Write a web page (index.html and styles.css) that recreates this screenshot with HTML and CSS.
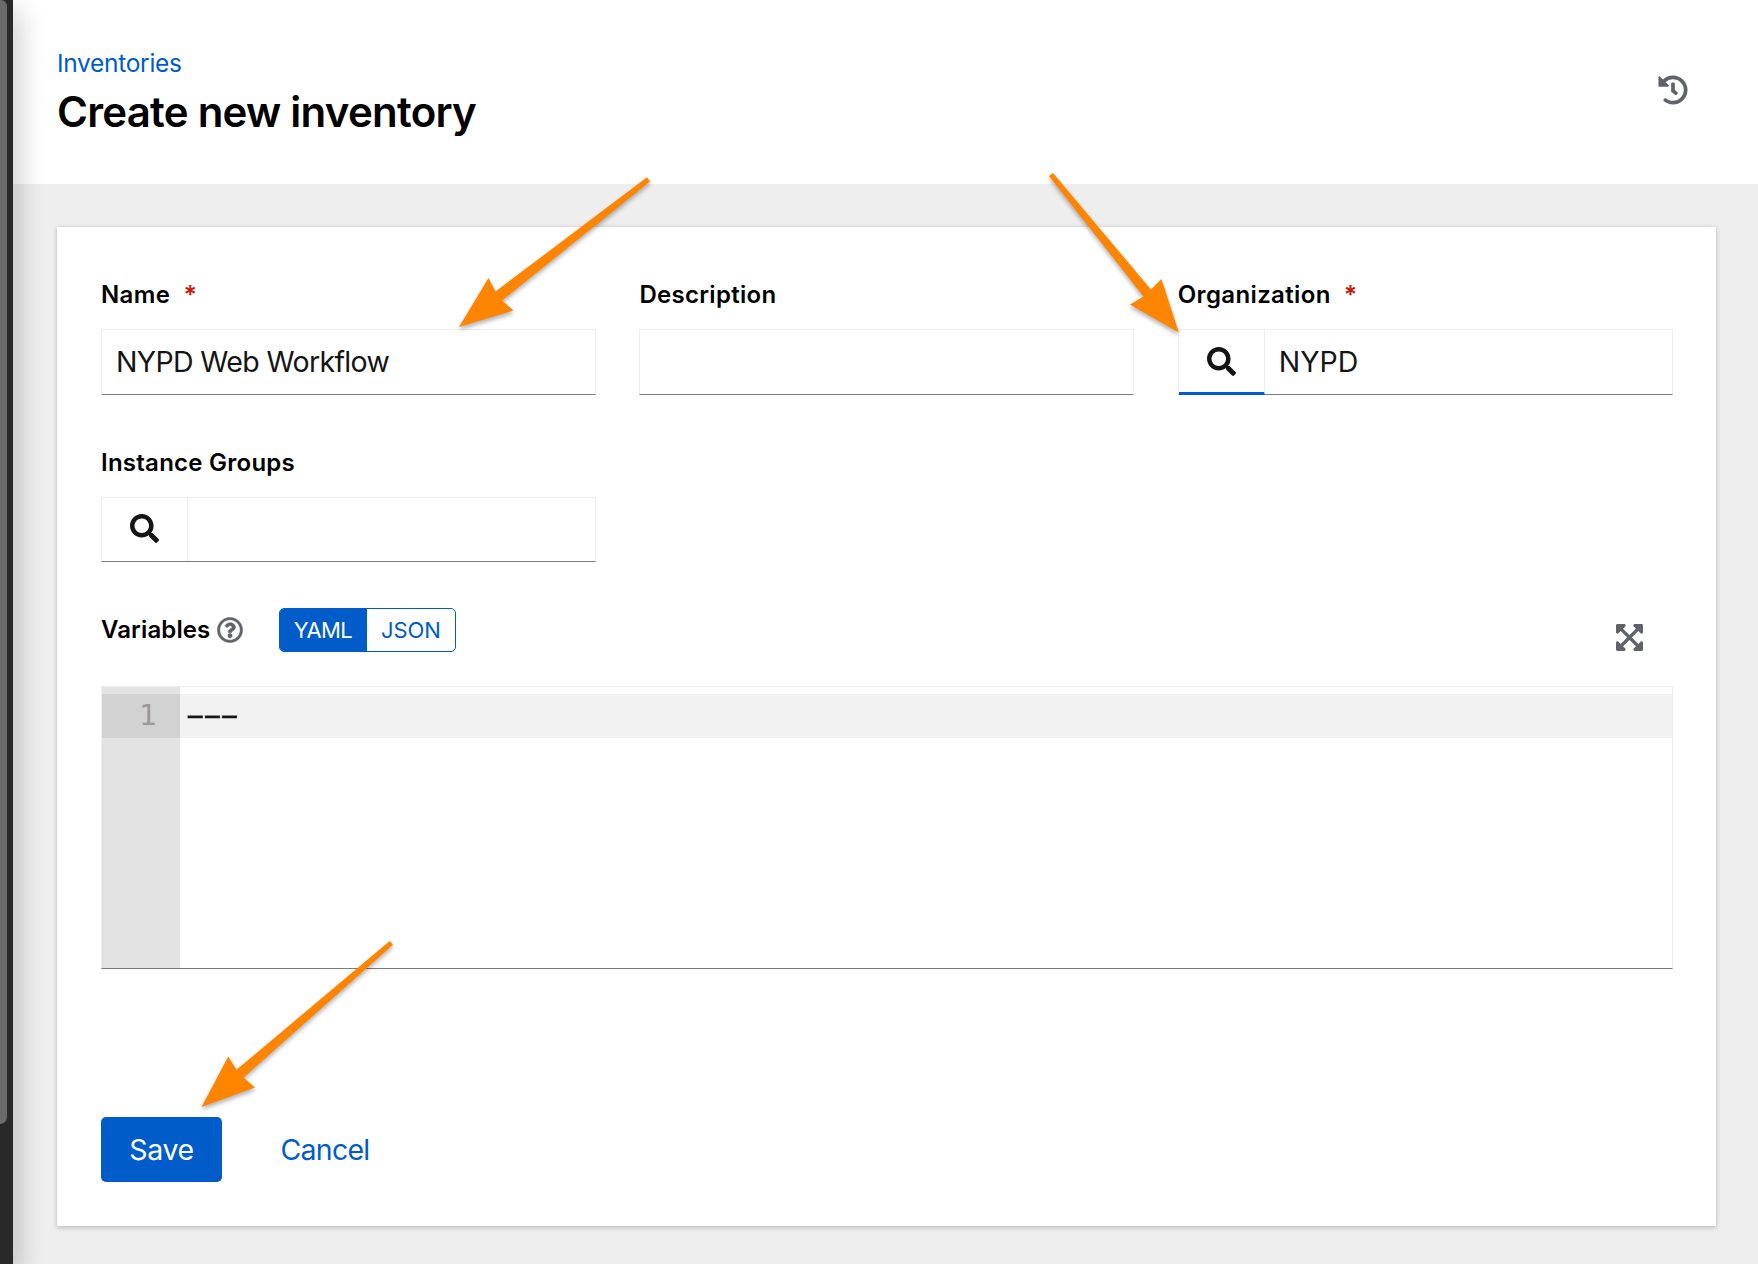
FILE: index.html
```html
<!DOCTYPE html>
<html lang="en">
<head>
<meta charset="utf-8">
<title>Create new inventory</title>
<link rel="stylesheet" href="styles.css">
</head>
<body>
<svg class="sprite" aria-hidden="true">
  <symbol id="search" viewBox="0 0 512 512"><path d="M505 442.7L405.3 343c-4.5-4.5-10.6-7-17-7H372c27.6-35.3 44-79.7 44-128C416 93.1 322.9 0 208 0S0 93.1 0 208s93.1 208 208 208c48.3 0 92.7-16.4 128-44v16.3c0 6.4 2.5 12.5 7 17l99.7 99.7c9.4 9.4 24.6 9.4 33.9 0l28.3-28.3c9.4-9.4 9.4-24.6.1-34zM208 336c-70.7 0-128-57.2-128-128 0-70.7 57.2-128 128-128 70.7 0 128 57.2 128 128 0 70.7-57.2 128-128 128z"/></symbol>
</svg>
<div class="app">
  <aside class="sidebar"><div class="thumb"></div></aside>
  <main class="main">
    <header class="header">
      <div>
        <a class="crumb">Inventories</a>
        <h1 class="title">Create new inventory</h1>
      </div>
      <svg class="history" viewBox="0 0 512 512"><path d="M504 255.531c.253 136.64-111.18 248.372-247.82 248.468-59.015.042-113.223-20.53-155.822-54.911-11.077-8.94-11.905-25.541-1.839-35.607l11.267-11.267c8.609-8.609 22.353-9.551 31.891-1.984C173.062 425.135 212.781 440 256 440c101.705 0 184-82.311 184-184 0-101.705-82.311-184-184-184-48.814 0-93.149 18.969-126.068 49.932l50.754 50.754c10.08 10.08 2.941 27.314-11.313 27.314H24c-8.837 0-16-7.163-16-16V38.627c0-14.254 17.234-21.393 27.314-11.314l49.372 49.372C129.209 34.136 189.552 8 256 8c136.81 0 247.747 110.78 248 247.531zm-180.912 78.784l9.823-12.63c8.138-10.463 6.253-25.542-4.21-33.679L288 256.349V152c0-13.255-10.745-24-24-24h-16c-13.255 0-24 10.745-24 24v135.651l65.409 50.874c10.463 8.137 25.541 6.253 33.679-4.21z"/></svg>
    </header>
    <section class="card">
      <div class="fields">
        <div class="field">
          <label class="label"><span class="t-name">Name</span><span class="req">*</span></label>
          <div class="input"><span class="value t-value">NYPD Web Workflow</span></div>
        </div>
        <div class="field">
          <label class="label"><span class="t-desc">Description</span></label>
          <div class="input"></div>
        </div>
        <div class="field">
          <label class="label"><span class="t-org">Organization</span><span class="req">*</span></label>
          <div class="input lookup">
            <button class="find active"><svg viewBox="0 0 512 512"><use href="#search"/></svg></button>
            <span class="value">NYPD</span>
          </div>
        </div>
        <div class="field">
          <label class="label"><span class="t-inst">Instance Groups</span></label>
          <div class="input lookup short">
            <button class="find"><svg viewBox="0 0 512 512"><use href="#search"/></svg></button>
          </div>
        </div>
      </div>
      <div class="vars">
        <span class="label t-vars">Variables</span>
        <svg class="help" viewBox="0 0 512 512"><path d="M256 8C119.043 8 8 119.083 8 256c0 136.997 111.043 248 248 248s248-111.003 248-248C504 119.083 392.957 8 256 8zm0 448c-110.532 0-200-89.431-200-200 0-110.495 89.472-200 200-200 110.491 0 200 89.471 200 200 0 110.53-89.431 200-200 200zm107.244-255.2c0 67.052-72.421 68.084-72.421 92.863V300c0 6.627-5.373 12-12 12h-45.647c-6.627 0-12-5.373-12-12v-8.659c0-35.745 27.1-50.034 47.579-61.516 17.561-9.845 28.324-16.541 28.324-29.579 0-17.246-21.999-28.693-39.784-28.693-23.189 0-33.894 10.977-48.942 29.969-4.057 5.12-11.46 6.071-16.666 2.124l-27.824-21.098c-5.107-3.872-6.251-11.066-2.644-16.363C184.846 131.491 214.94 112 261.794 112c49.071 0 101.45 38.304 101.45 88.8zM298 368c0 23.159-18.841 42-42 42s-42-18.841-42-42 18.841-42 42-42 42 18.841 42 42z"/></svg>
        <div class="toggle">
          <button class="opt on"><span class="t-yaml">YAML</span></button>
          <button class="opt"><span class="t-json">JSON</span></button>
        </div>
        <svg class="expand" viewBox="0 32 448 448"><path d="M448 344v112a23.94 23.94 0 0 1-24 24H312c-21.39 0-32.09-25.9-17-41l36.2-36.2L224 295.6 116.77 402.9 153 439c15.09 15.1 4.39 41-17 41H24a23.94 23.94 0 0 1-24-24V344c0-21.4 25.89-32.1 41-17l36.19 36.2L184.46 256 77.18 148.7 41 185c-15.1 15.1-41 4.4-41-17V56a23.94 23.94 0 0 1 24-24h112c21.39 0 32.09 25.9 17 41l-36.2 36.2L224 216.4l107.23-107.3L295 73c-15.09-15.1-4.39-41 17-41h112a23.94 23.94 0 0 1 24 24v112c0 21.4-25.89 32.1-41 17l-36.19-36.2L263.54 256l107.28 107.3L407 327.1c15.1-15.2 41-4.5 41 16.9z"/></svg>
      </div>
      <div class="editor">
        <div class="gutter"><div class="line-no">1</div></div>
        <div class="code"><div class="line"><span class="dashes">---</span></div></div>
      </div>
      <div class="actions">
        <button class="save"><span class="t-save">Save</span></button>
        <a class="cancel"><span class="t-cancel">Cancel</span></a>
      </div>
    </section>
  </main>
  <svg class="arrows" viewBox="0 0 1758 1264">
    <path d="M459 327L488.5 278 495.5 291.5 647 177.3 650 181.5 502 300.5 513.5 310.5Z"/>
    <path d="M1178.8 332.5L1161.5 279 1151 289.5 1053 173 1049 176 1143.5 296.5 1130 304.5Z"/>
    <path d="M201.5 1107L228.3 1056.5 236.5 1069.8 389.7 941 393 944.7 243.5 1077.5 255 1087.5Z"/>
  </svg>
</div>
</body>
</html>
```
FILE: styles.css
```css
* { box-sizing: border-box; }
body { margin: 0; font-family: Inter, "Liberation Sans", sans-serif; color: #151515; }
button { border: 0; padding: 0; background: none; font: inherit; }
span { white-space: nowrap; }
.sprite { display: none; }
.app { position: relative; display: flex; width: 1758px; height: 1264px; overflow: hidden; background: #eee; }
.sidebar { width: 13px; flex: none; background: #292929; box-shadow: 3px 12px 26px 2px rgba(3, 3, 3, .25); z-index: 1; }
.thumb { width: 7px; height: 1124px; background: #6b6b6b; border-radius: 0 6px 7px 0; }
.main { flex: 1; }
.header { display: flex; justify-content: space-between; height: 184px; padding: 44px 70px 0 44px; background: #fff; }
.crumb { display: block; font-size: 24.5px; line-height: 38px; letter-spacing: -.3px; color: #005cc8; }
.title { margin: 3px 0 0; font-size: 42px; line-height: 54px; font-weight: 600; letter-spacing: -.75px; color: #000; white-space: nowrap; }
.history { width: 30px; height: 30px; margin-top: 30.5px; fill: #5f6368; }
.card { width: 1659px; height: 999px; margin: 43px 0 0 44px; padding: 50px 43px 44px 44px; background: #fff; box-shadow: 0 2px 5px rgba(3, 3, 3, .16), 0 0 4px rgba(3, 3, 3, .1); }
.fields { display: grid; grid-template-columns: repeat(3, 495px); column-gap: 43.4px; row-gap: 50px; }
.label { display: flex; font-size: 24px; line-height: 36px; font-weight: 600; color: #000; }
.t-name { letter-spacing: .4px; }
.t-desc { letter-spacing: .3px; }
.t-org { letter-spacing: .36px; }
.t-inst { letter-spacing: .25px; }
.t-vars { letter-spacing: .12px; }
.req { margin-left: 13px; color: #c9190b; font-weight: 600; font-size: 25px; }
.input { display: flex; align-items: center; height: 66px; margin-top: 16px; border: 1px solid #ededed; border-bottom-color: #797b7e; padding-left: 14px; }
.input.short { height: 65px; }
.lookup { padding-left: 0; }
.value { font-size: 28.5px; line-height: 44px; }
.t-value { letter-spacing: -.65px; }
.find { display: flex; align-items: center; justify-content: center; align-self: stretch; width: 86px; border-right: 1px solid #ededed; margin-right: 14px; }
.find.active { margin-bottom: -1px; border-bottom: 3px solid #005cc8; }
.find svg { width: 29px; height: 29px; fill: #151515; }
.short .find svg { margin-top: -2px; }
.vars { display: flex; align-items: center; height: 44px; margin-top: 46px; }
.help { width: 26px; height: 26px; margin-left: 7px; fill: #5f6368; stroke: #5f6368; stroke-width: 10; }
.toggle { display: flex; width: 177px; height: 44px; margin-left: 36px; border: 1px solid #005cc8; border-radius: 5px; overflow: hidden; }
.opt { flex: 1; font-size: 22px; line-height: 42px; color: #005cc8; }
.opt.on { flex: 0 0 87px; background: #005cc8; color: #fff; }
.t-yaml { letter-spacing: -.6px; margin-right: 2px; }
.t-json { margin-right: 1px; }
.expand { width: 27px; height: 27px; margin: 15px 30px 0 auto; fill: #5f6368; }
.editor { display: flex; height: 283px; margin-top: 34px; border: 1px solid #ededed; border-bottom-color: #797b7e; }
.gutter { width: 78px; padding-top: 7px; background: #e3e3e3; }
.line-no { height: 44px; padding-right: 23.5px; background: #d2d2d2; color: #999; text-align: right; font: 29px/43px "DejaVu Sans Mono", monospace; }
.code { flex: 1; padding-top: 7px; }
.line { height: 44px; background: #f2f2f2; font: 28.6px/42px "DejaVu Sans Mono", monospace; }
.dashes { display: inline-block; margin-left: -2px; letter-spacing: -8.65px; transform: scaleX(2); transform-origin: left; -webkit-text-stroke: .3px #151515; }
.actions { display: flex; align-items: center; height: 65px; margin-top: 148px; font-size: 28.5px; }
.save { width: 121px; height: 65px; border-radius: 5px; background: #005cc8; color: #fff; }
.t-save { letter-spacing: -.4px; }
.cancel { margin-left: 58.5px; color: #005cc8; }
.t-cancel { letter-spacing: -.75px; }
.arrows { position: absolute; inset: 0; width: 1758px; height: 1264px; z-index: 2; fill: #ff8400; filter: drop-shadow(0 3px 2px rgba(0, 0, 0, .3)); pointer-events: none; }
```
